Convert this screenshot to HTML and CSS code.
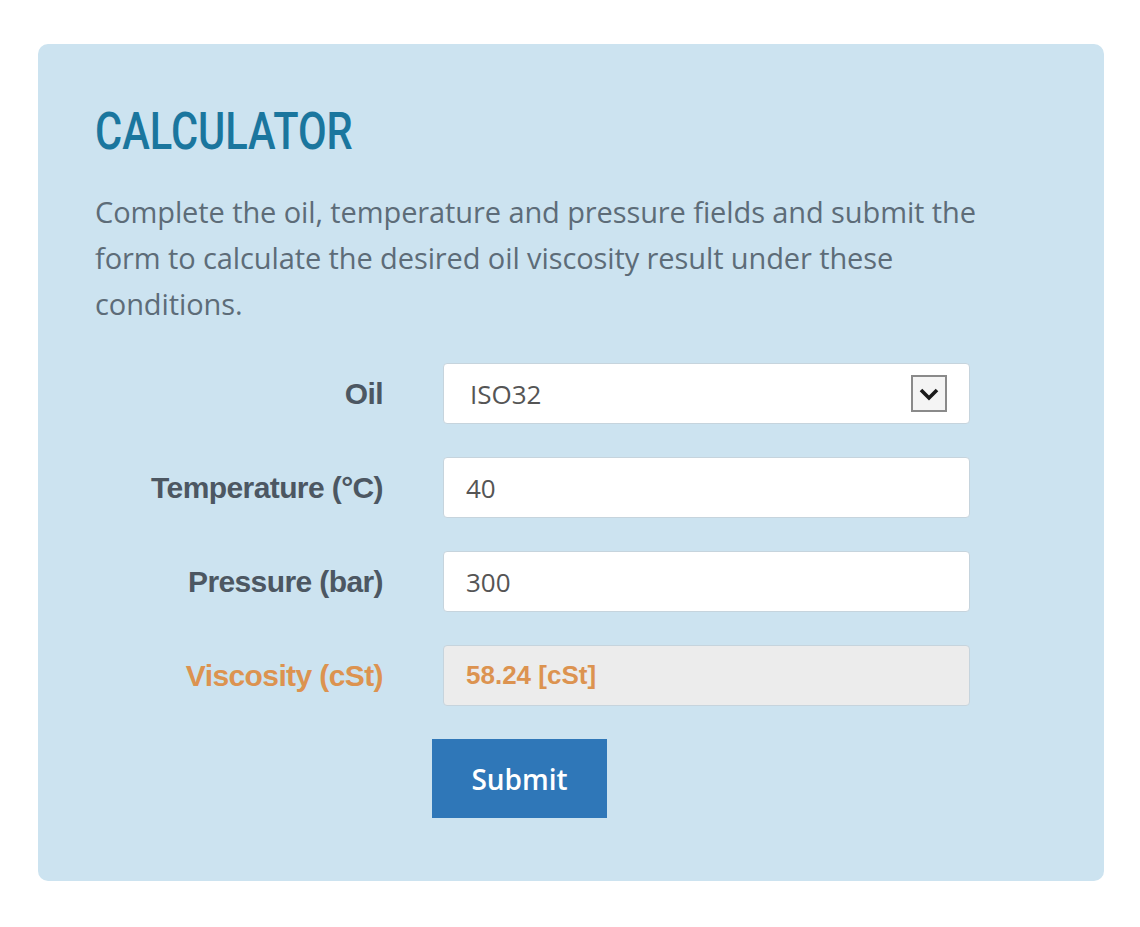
FILE: index.html
```html
<!DOCTYPE html>
<html lang="en">
<head>
  <meta charset="UTF-8">
  <meta name="viewport" content="width=device-width, initial-scale=1.0">
  <title>Calculator</title>
  <link rel="stylesheet" href="styles.css">
</head>
<body>
  <div class="panel">
    <h1>CALCULATOR</h1>
    <p class="intro">Complete the oil, temperature and pressure fields and submit the form to calculate the desired oil viscosity result under these conditions.</p>

    <form class="calc-form">
      <div class="row">
        <label for="oil">Oil</label>
        <div class="select-wrap">
          <select id="oil" name="oil">
            <option>ISO32</option>
            <option>ISO46</option>
            <option>ISO68</option>
          </select>
          <span class="select-arrow">
            <svg width="22" height="14" viewBox="0 0 22 14"><path d="M3 3 L11 11 L19 3" fill="none" stroke="#1a1a1a" stroke-width="3.6"/></svg>
          </span>
        </div>
      </div>
      <div class="row">
        <label for="temp">Temperature (°C)</label>
        <input type="text" id="temp" name="temp" value="40">
      </div>
      <div class="row">
        <label for="pressure">Pressure (bar)</label>
        <input type="text" id="pressure" name="pressure" value="300">
      </div>
      <div class="row result">
        <label for="visc">Viscosity (cSt)</label>
        <input type="text" id="visc" name="visc" value="58.24 [cSt]" readonly>
      </div>
      <div class="row">
        <span></span>
        <button type="submit">Submit</button>
      </div>
    </form>
  </div>
</body>
</html>
```

FILE: styles.css
```css
/* General Styles */
body {
  margin: 0;
  padding: 44px 36px 47px 38px;
  background: #fff;
  font-family: 'Open Sans', sans-serif;
}

.panel {
  background: #cce3f0;
  border-radius: 10px;
  padding: 57px 94px 63px 57px;
}

/* Condensed look of the heading */
h1 {
  display: inline-block;
  font-family: 'Roboto', sans-serif;
  font-weight: 500;
  font-size: 52px;
  line-height: 1.2;
  color: #1a769e;
  margin: 0 0 26px;
  transform: scaleX(0.8);
  transform-origin: left center;
}

.intro {
  font-size: 29px;
  line-height: 46px;
  letter-spacing: -0.1px;
  color: #5d6c78;
  margin: 0 0 36px;
}

.calc-form {
  display: grid;
  row-gap: 33px;
}

.row {
  display: grid;
  grid-template-columns: 288px 527px;
  column-gap: 60px;
  align-items: center;
}

label {
  font-family: 'Liberation Sans', Arial, sans-serif;
  font-weight: bold;
  font-size: 30px;
  letter-spacing: -0.6px;
  color: #4c5762;
  text-align: right;
}

input[type="text"],
select {
  box-sizing: border-box;
  width: 100%;
  height: 61px;
  padding: 0 22px;
  border: 1px solid #c6d4dd;
  border-radius: 4px;
  background: #fff;
  font-family: 'Open Sans', sans-serif;
  font-size: 26px;
  color: #555;
  outline: none;
}

.select-wrap {
  position: relative;
}

select {
  appearance: none;
  -webkit-appearance: none;
  padding-left: 26px;
}

.select-arrow {
  position: absolute;
  right: 23px;
  top: 12px;
  width: 36px;
  height: 37px;
  box-sizing: border-box;
  border: 2px solid #8a8a8a;
  background: #f4f4f4;
  display: flex;
  align-items: center;
  justify-content: center;
  pointer-events: none;
}

.result label {
  color: #dc9350;
}

.result input {
  background: #ececec;
  color: #dc9350;
  font-family: 'Liberation Sans', Arial, sans-serif;
  font-weight: bold;
  font-size: 26px;
}

button {
  justify-self: start;
  margin-left: -11px;
  margin-top: 0;
  width: 175px;
  height: 79px;
  background: #2f77b8;
  color: #fff;
  border: none;
  font-family: 'Open Sans', sans-serif;
  font-weight: 600;
  font-size: 28px;
  cursor: pointer;
}
```
